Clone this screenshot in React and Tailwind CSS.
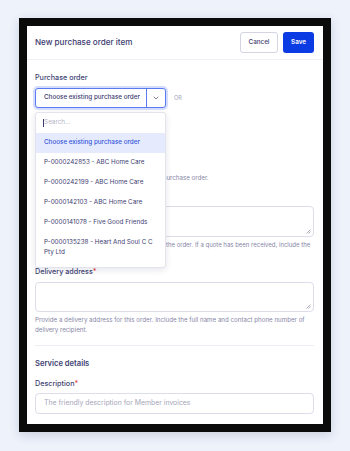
import React from "react";
import { ChevronDown } from "lucide-react";

const font = { fontFamily: "Inter, 'Noto Sans', sans-serif" };

function Handle() {
  return (
    <svg className="absolute right-[2px] bottom-[2px]" width="5" height="5" viewBox="0 0 5 5">
      <path d="M4.5 0.5 L0.5 4.5 M4.5 2.5 L2.5 4.5" stroke="#8b8ba3" strokeWidth="0.7" />
    </svg>
  );
}

export default function App() {
  const items = [
    "P-0000242853 - ABC Home Care",
    "P-0000242199 - ABC Home Care",
    "P-0000142103 - ABC Home Care",
    "P-0000141078 - Five Good Friends",
  ];
  return (
    <div className="w-[350px] h-[451px] bg-[#eef2fb] pt-[18px] pl-[19px]" style={font}>
      <div className="w-[312px] h-[414px] bg-[#0b0b0b] p-[8px] shadow-[0_3px_10px_rgba(40,50,90,0.18)]">
        <div className="w-[296px] h-[398px] bg-white overflow-hidden flex flex-col">
          {/* header */}
          <div className="h-[34px] shrink-0 flex items-center justify-between pl-[8px] pr-[9px] border-b border-[#eef0f5]">
            <div className="text-[8.1px] text-[#3b3a6e] font-medium">New purchase order item</div>
            <div className="flex items-center gap-[5px]">
              <button className="h-[21px] w-[38px] rounded-[3px] border border-[#d3d5e3] bg-white text-[6.3px] font-medium text-[#3b3a6e]">
                Cancel
              </button>
              <button className="h-[21px] w-[31px] rounded-[3px] bg-[#0b3be2] text-[6.3px] font-semibold text-white">
                Save
              </button>
            </div>
          </div>

          {/* body */}
          <div className="pl-[8px] pr-[9px] flex flex-col">
            <div className="mt-[13px] h-[10px] leading-[10px] text-[7.2px] font-medium text-[#403f73]">Purchase order</div>
            <div className="mt-[5px] flex items-center">
              <div className="relative">
                <div className="w-[131px] h-[20px] rounded-[3px] border border-[#5b7af2] ring-2 ring-[#d4ddfd] flex items-center bg-white">
                  <div className="flex-1 pl-[8px] text-[6.3px] text-[#3d3c70] font-medium whitespace-nowrap">
                    Choose existing purchase order
                  </div>
                  <div className="w-[19px] h-full border-l border-[#5b7af2] flex items-center justify-center">
                    <ChevronDown size={8} strokeWidth={2.2} color="#54537e" />
                  </div>
                </div>
                {/* dropdown */}
                <div className="absolute left-0 top-[24px] w-[131px] h-[156px] z-10 bg-white border border-[#e2e3ec] rounded-[3px] shadow-[0_2px_6px_rgba(40,50,90,0.12)] flex flex-col">
                  <div className="h-[20px] shrink-0 flex items-center pl-[7px] text-[6.3px] text-[#b4b4c6]">
                    <span className="w-[0.6px] h-[8px] bg-[#3d3c70] mr-[0.5px]"></span>Search...
                  </div>
                  <div className="h-[20px] shrink-0 flex items-center pl-[8px] bg-[#e5ebfd] text-[6.3px] font-medium text-[#3656d9]">
                    Choose existing purchase order
                  </div>
                  {items.map((t) => (
                    <div key={t} className="h-[20px] shrink-0 flex items-center pl-[8px] text-[6.3px] text-[#3d3c70]">
                      {t}
                    </div>
                  ))}
                  <div className="pt-[5px] pl-[8px] pr-[6px] text-[6.3px] leading-[9.6px] text-[#3d3c70]">
                    P-0000135238 - Heart And Soul C C Pty Ltd
                  </div>
                </div>
              </div>
              <div className="ml-[8px] text-[5.6px] text-[#a3a3bb]">OR</div>
            </div>

            {/* hidden behind dropdown */}
            <button className="mt-[12px] ml-[6px] h-[20px] w-[110px] rounded-[3px] border border-[#d3d5e3] text-[6px] text-[#3d3c70] self-start">
              Create new purchase order
            </button>
            <div className="mt-[33px] h-[10px] leading-[10px] text-[6.2px] text-[#8786a7] whitespace-nowrap">
              Create a new one when there is no existing purchase order.
            </div>

            <div className="mt-[8px] pl-[6px] h-[10px] leading-[10px] text-[7.2px] font-medium text-[#403f73]">
              Order details<span className="text-[#e5484d]">*</span>
            </div>
            <div className="relative mt-[5px] h-[31px] rounded-[4px] border border-[#dcdde9]">
              <Handle />
            </div>
            <div className="mt-[3px] leading-[10px] text-[6px] text-[#8786a7]">
              Describe all the goods or services included in the order. If a quote has been received, include the quote number.
            </div>

            <div className="mt-[7px] h-[10px] leading-[10px] text-[7.2px] font-medium text-[#403f73]">
              Delivery address<span className="text-[#e5484d]">*</span>
            </div>
            <div className="relative mt-[5px] h-[30px] rounded-[4px] border border-[#dcdde9]">
              <Handle />
            </div>
            <div className="mt-[3px] leading-[10px] text-[6.2px] text-[#8786a7]">
              Provide a delivery address for this order. Include the full name and contact phone number of delivery recipient.
            </div>

            <div className="mt-[10px] border-t border-[#ecedf3]"></div>

            <div className="mt-[12px] h-[12px] leading-[12px] text-[7.6px] font-semibold text-[#403f73]">Service details</div>
            <div className="mt-[9px] h-[10px] leading-[10px] text-[7.2px] font-medium text-[#403f73]">
              Description<span className="text-[#e5484d]">*</span>
            </div>
            <div className="mt-[4px] h-[21px] rounded-[4px] border border-[#dcdde9] flex items-center pl-[8px] text-[6.9px] text-[#a6a6b9]">
              The friendly description for Member invoices
            </div>
            <div className="mt-[9px] h-[10px] leading-[10px] text-[7.2px] font-medium text-[#403f73]">
              Pre-approved amount<span className="text-[#e5484d]">*</span>
            </div>
          </div>
        </div>
      </div>
    </div>
  );
}
